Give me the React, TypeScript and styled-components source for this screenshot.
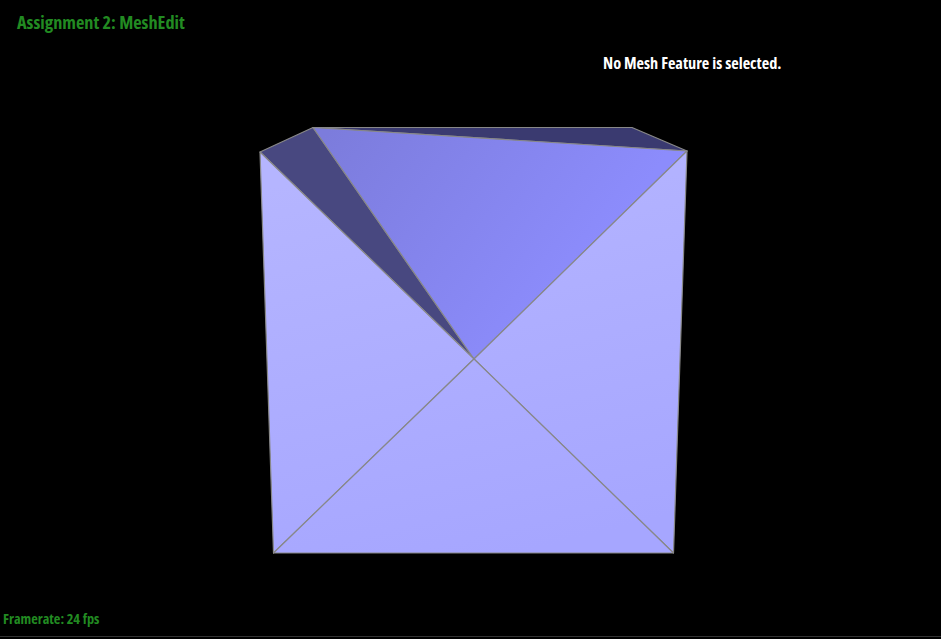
import React from "react";
import styled, { createGlobalStyle } from "styled-components";

const Global = createGlobalStyle`
  html, body { margin: 0; padding: 0; background: #000; }
  #root { width: 941px; height: 639px; overflow: hidden; }
`;

const Viewport = styled.div`
  position: relative;
  width: 941px;
  height: 639px;
  background: #000;
  overflow: hidden;
  font-family: "Open Sans", "Noto Sans", sans-serif;
  font-stretch: condensed;
  font-weight: 700;
`;

const MeshCanvas = styled.svg`
  display: block;
  width: 941px;
  height: 639px;
`;

const Hud = styled.div`
  position: absolute;
  inset: 0;
  display: flex;
  flex-direction: column;
  padding: 12px 0 2px 3px;
  box-sizing: border-box;
`;

const Title = styled.div`
  margin-left: 14px;
  font-size: 18.3px;
  line-height: 19px;
  color: #228b22;
  white-space: nowrap;
`;

const Status = styled.div`
  margin: 24px 0 0 600px;
  font-size: 16.3px;
  line-height: 17px;
  color: #ffffff;
  white-space: nowrap;
`;

const Framerate = styled.div`
  margin-top: auto;
  font-size: 14.3px;
  line-height: 15px;
  padding-bottom: 10px;
  color: #228b22;
  white-space: nowrap;
`;

const BottomEdge = styled.div`
  height: 1px;
  margin-left: -3px;
  background: #333;
`;

const A = "260,152";
const B = "313,127.5";
const C = "632,127.5";
const D = "687,151";
const E = "474,359";
const F = "273.5,553";
const G = "673.5,553";

const faces = [
  { pts: [B, C, D], fill: "#3a3a70" },
  { pts: [A, B, E], fill: "#484880" },
  { pts: [B, D, E], fill: "url(#top)" },
  { pts: [A, E, F], fill: "url(#side)" },
  { pts: [D, G, E], fill: "url(#side)" },
  { pts: [F, E, G], fill: "url(#side)" },
];

export default function App() {
  return (
    <Viewport>
      <Global />
      <MeshCanvas viewBox="0 0 941 639">
        <defs>
          <linearGradient id="side" gradientUnits="userSpaceOnUse" x1="420" y1="150" x2="520" y2="553">
            <stop offset="0" stopColor="#b5b5ff" />
            <stop offset="1" stopColor="#a6a6ff" />
          </linearGradient>
          <linearGradient id="top" gradientUnits="userSpaceOnUse" x1="330" y1="130" x2="560" y2="300">
            <stop offset="0" stopColor="#7c7cdc" />
            <stop offset="1" stopColor="#8c8cfc" />
          </linearGradient>
        </defs>
        {faces.map((f) => (
          <polygon
            key={f.pts.join(" ")}
            points={f.pts.join(" ")}
            fill={f.fill}
            stroke="#888888"
            strokeWidth={1.2}
            strokeLinejoin="round"
          />
        ))}
      </MeshCanvas>
      <Hud>
        <Title>Assignment 2: MeshEdit</Title>
        <Status>No Mesh Feature is selected.</Status>
        <Framerate>Framerate: 24 fps</Framerate>
        <BottomEdge />
      </Hud>
    </Viewport>
  );
}
